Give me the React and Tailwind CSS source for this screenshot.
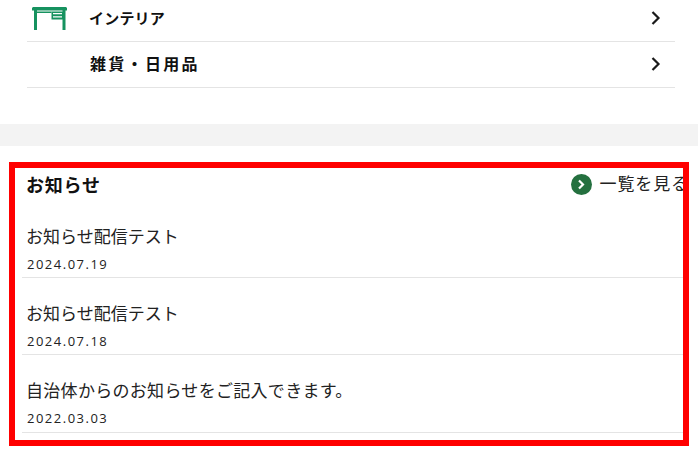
import React from "react";

const FONT = "font-['Open_Sans','Noto_Sans_CJK_JP',sans-serif]";

function Desk() {
  return (
    <svg width="35" height="23" viewBox="0 0 35 23" className="block">
      <path fill="#16925f" d="M1 0H34L35 1V3.500H0V1Z" />
      <path fill="#16925f" d="M2 3H5V23H2ZM30.500 3H33.500V23H30.500Z" />
      <path fill="#16925f" d="M5 4.500H19.500V6H5Z" />
      <path fill="#16925f" fillRule="evenodd" d="M19.500 4.500H31V12.500H19.500ZM21 6V7.200H30V6ZM21 9.200V10.500H30V9.200Z" />
    </svg>
  );
}

function Chevron() {
  return (
    <svg width="12" height="16" viewBox="0 0 12 16" fill="none" stroke="#1a1a1a" strokeWidth="2.200">
      <path d="M2.500 2L8.500 8L2.500 14" />
    </svg>
  );
}

function CatRow({ label, icon, className, textClass }) {
  return (
    <div className={`flex items-center border-b border-[#e4e4e4] ${className}`}>
      <div className="w-[62px] shrink-0">{icon}</div>
      <span className={`flex-1 font-semibold text-[#111] ${textClass}`}>{label}</span>
      <span className="mr-[13px] flex"><Chevron /></span>
    </div>
  );
}

function News({ title, date, h, track }) {
  return (
    <div className={`ml-[7px] border-b border-[#e4e4e4] pl-[4px] pt-[23px] ${h}`}>
      <p className={`text-[17px] font-normal leading-[26px] text-[#222] ${track}`}>{title}</p>
      <p className="mt-[5px] pl-[1px] text-[13px] leading-[18px] tracking-[1.500px] text-[#222]">{date}</p>
    </div>
  );
}

export default function App() {
  return (
    <div className={`h-[472px] w-[698px] overflow-hidden bg-white ${FONT}`}>
      <div className="mx-[27px] w-[648px]">
        <CatRow className="h-[42px] pb-[5px]" textClass="text-[15px] tracking-[0.200px]" label="インテリア" icon={<div className="ml-[5px]"><Desk /></div>} />
        <CatRow className="h-[46px] pb-[2px]" textClass="pl-[1px] text-[16px] tracking-[2.300px]" label="雑貨・日用品" />
      </div>
      <div className="mt-[36px] h-[22px] bg-[#f3f3f3]" />
      <div className="ml-[9px] mt-[16px] h-[284px] w-[680px] overflow-hidden border-[6px] border-[#ff0000]">
        <div className="-mr-[6px] flex h-[33px] items-start justify-between pl-[11px]">
          <h2 className="pt-[4px] text-[18px] font-semibold leading-[26px] tracking-[0.800px] text-[#111]">お知らせ</h2>
          <div className="flex items-center gap-[8px] whitespace-nowrap pt-[4px]">
            <span className="flex h-[21px] w-[21px] items-center justify-center rounded-full bg-[#24703f]">
              <svg width="9" height="11" viewBox="0 0 9 11" fill="none" stroke="#fff" strokeWidth="2.200"><path d="M2 1.500L6 5.500L2 9.500" /></svg>
            </span>
            <span className="text-[17px] leading-[24px] tracking-[0.900px] text-[#222]">一覧を見る</span>
          </div>
        </div>
        <News h="h-[77px]" track="tracking-[0px]" title="お知らせ配信テスト" date="2024.07.19" />
        <News h="h-[77px]" track="tracking-[0px]" title="お知らせ配信テスト" date="2024.07.18" />
        <News h="h-[78px]" track="tracking-[0.300px]" title="自治体からのお知らせをご記入できます。" date="2022.03.03" />
      </div>
    </div>
  );
}
